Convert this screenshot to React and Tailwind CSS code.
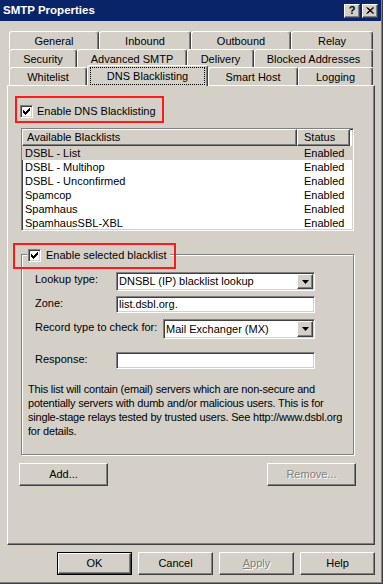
import React from "react";

const raised =
  "border border-t-white border-l-white border-r-[#404040] border-b-[#404040] shadow-[inset_-1px_-1px_0_#808080,inset_1px_1px_0_#d4d0c8]";
const sunken =
  "border border-t-[#808080] border-l-[#808080] border-r-white border-b-white shadow-[inset_1px_1px_0_#404040,inset_-1px_-1px_0_#d4d0c8]";

function Check() {
  return (
    <div className={`${sunken} w-[13px] h-[13px] bg-white shrink-0 relative`}>
      <svg width="11" height="11" viewBox="0 0 11 11" className="absolute left-0 top-0">
        <g fill="#000">
          <rect x="8" y="2" width="1" height="1" />
          <rect x="7" y="3" width="2" height="1" />
          <rect x="2" y="4" width="1" height="1" />
          <rect x="6" y="4" width="3" height="1" />
          <rect x="2" y="5" width="2" height="1" />
          <rect x="5" y="5" width="3" height="1" />
          <rect x="2" y="6" width="5" height="1" />
          <rect x="3" y="7" width="3" height="1" />
          <rect x="4" y="8" width="1" height="1" />
        </g>
      </svg>
    </div>
  );
}

function Arrow() {
  return (
    <svg width="7" height="4" viewBox="0 0 7 4">
      <polygon points="0,0 7,0 3.5,4" fill="#000" />
    </svg>
  );
}

function Combo({ className, text }) {
  return (
    <div className={`${sunken} bg-white flex items-stretch ${className}`}>
      <span className="flex-1 pl-[2px] flex items-center whitespace-nowrap overflow-hidden">{text}</span>
      <div className={`${raised} w-[16px] bg-[#d4d0c8] flex items-center justify-center m-[1px]`}>
        <Arrow />
      </div>
    </div>
  );
}

function Tab({ className, label }) {
  return (
    <div
      className={`h-[18px] bg-[#d4d0c8] border-l border-t border-r border-l-white border-t-white border-r-[#404040] shadow-[inset_-1px_0_0_#808080] rounded-t-[3px] flex items-center justify-center pt-[1px] whitespace-nowrap ${className}`}
    >
      {label}
    </div>
  );
}

function Btn({ className, children, disabled, def }) {
  const inner = (
    <div
      className={`${raised} h-full w-full flex items-center justify-center ${
        disabled ? "text-[#808080] [text-shadow:1px_1px_0_#fff]" : ""
      }`}
    >
      {children}
    </div>
  );
  if (def) {
    return <div className={`border border-black ${className}`}>{inner}</div>;
  }
  return <div className={className}>{inner}</div>;
}

const rows = [
  "DSBL - List",
  "DSBL - Multihop",
  "DSBL - Unconfirmed",
  "Spamcop",
  "Spamhaus",
  "SpamhausSBL-XBL",
];

export default function App() {
  return (
    <div className="w-[383px] h-[584px] bg-[#d4d0c8] [font-family:'Liberation_Sans',Arial,sans-serif] text-[11px] text-black leading-none overflow-hidden flex flex-col border-r border-b border-r-[#404040] border-b-[#404040] shadow-[inset_-1px_-1px_0_#808080]">
      {/* Title bar */}
      <div className="h-[21px] mr-[1px] bg-[#0a246a] flex items-center pl-[3px] pr-[3px] shrink-0">
        <span className="text-white font-bold text-[11.5px]">SMTP Properties</span>
        <div className="ml-auto flex gap-[2px]">
          <div className={`${raised} w-[16px] h-[14px] bg-[#d4d0c8] flex items-center justify-center font-bold text-[11px]`}>
            ?
          </div>
          <div className={`${raised} w-[16px] h-[14px] bg-[#d4d0c8] flex items-center justify-center`}>
            <svg width="8" height="7" viewBox="0 0 8 7">
              <path d="M0.5 0.5 L7 6.5 M1.5 0.5 L8 6.5 M7 0.5 L0.5 6.5 M8 0.5 L1.5 6.5" stroke="#000" strokeWidth="1" />
            </svg>
          </div>
        </div>
      </div>

      {/* Tabs */}
      <div className="mt-[10px] ml-[9px] flex flex-col shrink-0">
        <div className="flex h-[18px] items-end">
          <Tab className="w-[90px]" label="General" />
          <Tab className="w-[92px]" label="Inbound" />
          <Tab className="w-[100px]" label="Outbound" />
          <Tab className="w-[82px]" label="Relay" />
        </div>
        <div className="flex h-[18px] items-end">
          <Tab className="w-[68px]" label="Security" />
          <Tab className="w-[110px]" label="Advanced SMTP" />
          <Tab className="w-[67px]" label="Delivery" />
          <Tab className="w-[119px]" label="Blocked Addresses" />
        </div>
        <div className="flex h-[18px] items-end">
          <Tab className="w-[78px]" label="Whitelist" />
          <div className="relative z-10 w-[121px] h-[21px] -mb-[1px] bg-[#d4d0c8] border-l border-t border-r border-l-white border-t-white border-r-[#404040] shadow-[inset_-1px_0_0_#808080] rounded-t-[3px] flex items-start justify-center pt-[1px]">
            <span className="border border-dotted border-black w-[115px] h-[18px] flex items-center justify-center">
              DNS Blacklisting
            </span>
          </div>
          <Tab className="w-[90px]" label="Smart Host" />
          <Tab className="w-[75px]" label="Logging" />
        </div>
      </div>

      {/* Panel */}
      <div className="ml-[7px] w-[368px] h-[460px] shrink-0 border border-t-white border-l-white border-r-[#404040] border-b-[#404040] shadow-[inset_-1px_-1px_0_#808080] flex flex-col">
        {/* Enable DNS Blacklisting */}
        <div className="ml-[7px] mt-[10px] w-[149px] h-[27px] border-2 border-[#ff1a1a] flex items-start pl-[3px] pt-[7px]">
          <div className="flex items-center">
            <Check />
            <span className="ml-[4px] whitespace-nowrap">Enable DNS Blacklisting</span>
          </div>
        </div>

        {/* List view */}
        <div className={`${sunken} ml-[13px] mt-[5px] w-[333px] h-[103px] bg-white overflow-hidden flex flex-col`}>
          <div className="flex h-[17px] shrink-0">
            <div className={`${raised} w-[275px] bg-[#d4d0c8] flex items-center pl-[4px]`}>Available Blacklists</div>
            <div className={`${raised} w-[53px] bg-[#d4d0c8] flex items-center pl-[6px]`}>Status</div>
          </div>
          {rows.map((r, i) => (
            <div key={r} className={`flex h-[14px] shrink-0 items-center ${i === 0 ? "bg-[#d4d0c8]" : ""}`}>
              <span className="w-[275px] pl-[3px]">{r}</span>
              <span className="pl-[7px]">Enabled</span>
            </div>
          ))}
        </div>

        {/* Group box */}
        <div className="relative ml-[13px] mt-[23px] w-[333px] h-[201px] border border-[#808080] shadow-[inset_1px_1px_0_#fff,1px_1px_0_#fff] flex flex-col pl-[13px]">
          <div className="absolute left-[5px] -top-[6px] bg-[#d4d0c8] flex items-center pl-[1px] pr-[4px]">
            <Check />
            <span className="ml-[5px] whitespace-nowrap">Enable selected blacklist</span>
          </div>
          <div className="absolute -left-[9px] -top-[12px] w-[163px] h-[26px] border-2 border-[#ff1a1a]" />

          <div className="flex items-start mt-[17px] h-[19px]">
            <span className="w-[81px] mt-[2px]">Lookup type:</span>
            <Combo className="w-[199px] h-[19px]" text="DNSBL (IP) blacklist lookup" />
          </div>
          <div className="flex items-start mt-[5px] h-[17px]">
            <span className="w-[81px] mt-[2px]">Zone:</span>
            <div className={`${sunken} w-[199px] h-[17px] bg-white flex items-center pl-[2px]`}>list.dsbl.org.</div>
          </div>
          <div className="flex items-start mt-[6px] h-[20px]">
            <span className="w-[128px] mt-[3px] whitespace-nowrap">Record type to check for:</span>
            <Combo className="w-[152px] h-[20px]" text="Mail Exchanger (MX)" />
          </div>
          <div className="flex items-start mt-[13px] h-[17px]">
            <span className="w-[81px] mt-[2px]">Response:</span>
            <div className={`${sunken} w-[199px] h-[17px] bg-white`} />
          </div>
          <div className="mt-[13px] -ml-[7px] leading-[14px] tracking-[-0.2px] flex flex-col">
            <span className="whitespace-nowrap">This list will contain (email) servers which are non-secure and</span>
            <span className="whitespace-nowrap">potentially servers with dumb and/or malicious users. This is for</span>
            <span className="whitespace-nowrap">single-stage relays tested by trusted users. See http://www.dsbl.org</span>
            <span className="whitespace-nowrap">for details.</span>
          </div>
        </div>

        {/* Add / Remove */}
        <div className="flex mt-[8px] ml-[11px] mr-[18px] justify-between">
          <Btn className="w-[89px] h-[23px]">Add...</Btn>
          <Btn className="w-[89px] h-[23px]" disabled>
            Remove...
          </Btn>
        </div>
      </div>

      {/* Bottom buttons */}
      <div className="flex justify-end gap-[6px] mt-[7px] mr-[7px]">
        <Btn className="w-[75px] h-[23px]" def>
          OK
        </Btn>
        <Btn className="w-[75px] h-[23px]">Cancel</Btn>
        <Btn className="w-[75px] h-[23px]" disabled>
          <span>
            <span className="underline">A</span>pply
          </span>
        </Btn>
        <Btn className="w-[75px] h-[23px]">Help</Btn>
      </div>
    </div>
  );
}
